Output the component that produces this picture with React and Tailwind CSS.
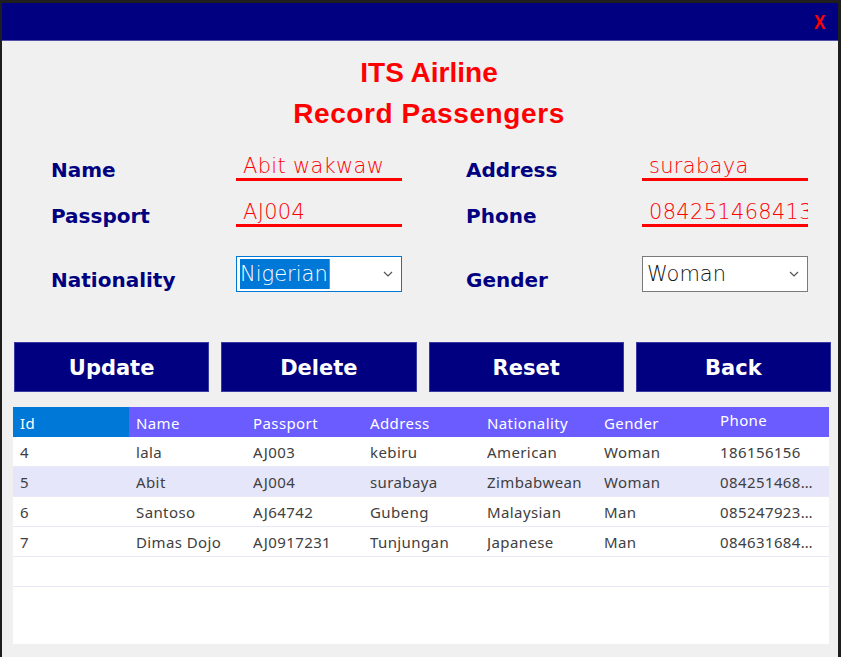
import React from 'react'

const passengers = [
  { id: 4, name: 'lala', passport: 'AJ003', address: 'kebiru', nationality: 'American', gender: 'Woman', phone: '186156156' },
  { id: 5, name: 'Abit', passport: 'AJ004', address: 'surabaya', nationality: 'Zimbabwean', gender: 'Woman', phone: '0842514684132', selected: true },
  { id: 6, name: 'Santoso', passport: 'AJ64742', address: 'Gubeng', nationality: 'Malaysian', gender: 'Man', phone: '0852479231234' },
  { id: 7, name: 'Dimas Dojo', passport: 'AJ0917231', address: 'Tunjungan', nationality: 'Japanese', gender: 'Man', phone: '0846316841234' },
]

const cols = [
  { key: 'id', label: 'Id', w: 'w-[116px]' },
  { key: 'name', label: 'Name', w: 'w-[117px]' },
  { key: 'passport', label: 'Passport', w: 'w-[117px]' },
  { key: 'address', label: 'Address', w: 'w-[117px]' },
  { key: 'nationality', label: 'Nationality', w: 'w-[117px]' },
  { key: 'gender', label: 'Gender', w: 'w-[116px]' },
  { key: 'phone', label: 'Phone', w: 'w-[116px]' },
]

const labelCls = "font-['DejaVu_Sans',sans-serif] font-bold text-[20px] leading-[24px] text-[#000080]"
const inputFont = "font-['DejaVu_Sans',sans-serif] font-extralight text-[21px]"

function Underlined({ value }) {
  return (
    <div className={`w-[166px] h-[31px] border-b-[3px] border-[#ff0000] pl-[7px] pt-[2px] overflow-hidden whitespace-nowrap leading-[28px] text-[#ff0000] tracking-[0.3px] ${inputFont}`}>
      {value}
    </div>
  )
}

function Chevron() {
  return (
    <svg width="10" height="6" viewBox="0 0 10 6" className="shrink-0">
      <polyline points="1,1 5,5 9,1" fill="none" stroke="#555" strokeWidth="1.2" />
    </svg>
  )
}

function Select({ value, focused }) {
  return (
    <div className={`w-[166px] h-[36px] bg-white border flex items-center pl-[3px] pr-[8px] ${focused ? 'border-[#0078d7]' : 'border-[#7a7a7a]'}`}>
      <div className="flex-1">
        {focused ? (
          <span className={`inline-block bg-[#0078d7] text-white leading-[30px] pr-[1px] border-r border-[#c8783c] ${inputFont}`}>{value}</span>
        ) : (
          <span className={`inline-block text-[#111] leading-[30px] pl-[1px] ${inputFont}`}>{value}</span>
        )}
      </div>
      <Chevron />
    </div>
  )
}

export default function App() {
  return (
    <div className="w-[841px] h-[657px] bg-[#1e1e1e] pt-[3px] pl-[2px] overflow-hidden">
      <div className="w-[836px] h-[654px] bg-[#f0f0f0] flex flex-col">
        <div className="h-[38px] bg-[#000080] border-b border-[#5050a8] flex items-center justify-end pr-[12px]">
          <span className="font-['Liberation_Sans',sans-serif] font-bold text-[20px] text-[#ff0000] scale-x-[0.85]">X</span>
        </div>

        <div className="pt-[14px] pl-[18px] flex flex-col items-center font-['Liberation_Sans',sans-serif] font-bold text-[28px] text-[#ff0000]">
          <div className="h-[36px] leading-[36px]">ITS Airline</div>
          <div className="h-[36px] leading-[36px] mt-[5px] tracking-[0.6px]">Record Passengers</div>
        </div>

        <div className="mt-[18px] pl-[49px] flex flex-col">
          <div className="flex h-[31px]">
            <div className={`w-[185px] pt-[8px] ${labelCls}`}>Name</div>
            <Underlined value="Abit wakwaw" />
            <div className="w-[64px]" />
            <div className={`w-[176px] pt-[8px] ${labelCls}`}>Address</div>
            <Underlined value="surabaya" />
          </div>
          <div className="flex h-[31px] mt-[15px]">
            <div className={`w-[185px] pt-[8px] ${labelCls}`}>Passport</div>
            <Underlined value="AJ004" />
            <div className="w-[64px]" />
            <div className={`w-[176px] pt-[8px] ${labelCls}`}>Phone</div>
            <Underlined value="0842514684132" />
          </div>
          <div className="flex h-[36px] mt-[29px]">
            <div className={`w-[185px] pt-[12px] ${labelCls}`}>Nationality</div>
            <Select value="Nigerian" focused />
            <div className="w-[64px]" />
            <div className={`w-[176px] pt-[12px] ${labelCls}`}>Gender</div>
            <Select value="Woman" />
          </div>
        </div>

        <div className="mt-[50px] ml-[12px] w-[817px] grid grid-cols-4 gap-[12px]">
          {['Update', 'Delete', 'Reset', 'Back'].map(b => (
            <div key={b} className="h-[50px] pt-[3px] bg-[#000080] border border-[#3a3aa0] flex items-center justify-center font-['DejaVu_Sans',sans-serif] font-bold text-[21px] text-white">
              {b}
            </div>
          ))}
        </div>

        <div className="mt-[15px] ml-[11px] w-[816px] h-[237px] bg-white font-['Noto_Sans',sans-serif] text-[15px] tracking-[0.4px]">
          <div className="flex h-[30px] bg-[#6a5cff] text-white">
            {cols.map(c => (
              <div key={c.key} className={`${c.w} pl-[7px] pt-[2px] flex items-center ${c.key === 'id' ? 'bg-[#0078d7]' : ''} ${c.key === 'phone' ? 'pb-[5px]' : ''}`}>
                {c.label}
              </div>
            ))}
          </div>
          {passengers.map(p => (
            <div key={p.id} className={`flex h-[30px] border-b border-[#e8e8f8] text-[#404040] ${p.selected ? 'bg-[#e6e6fb]' : ''}`}>
              {cols.map(c => (
                <div key={c.key} className={`${c.w} pl-[7px] pt-[2px] flex items-center overflow-hidden ${c.key === 'phone' ? 'pr-[14px]' : 'pr-[4px]'}`}>
                  <span className="truncate">{p[c.key]}</span>
                </div>
              ))}
            </div>
          ))}
          <div className="h-[30px] border-b border-[#e8e8f8]" />
        </div>
      </div>
    </div>
  )
}
